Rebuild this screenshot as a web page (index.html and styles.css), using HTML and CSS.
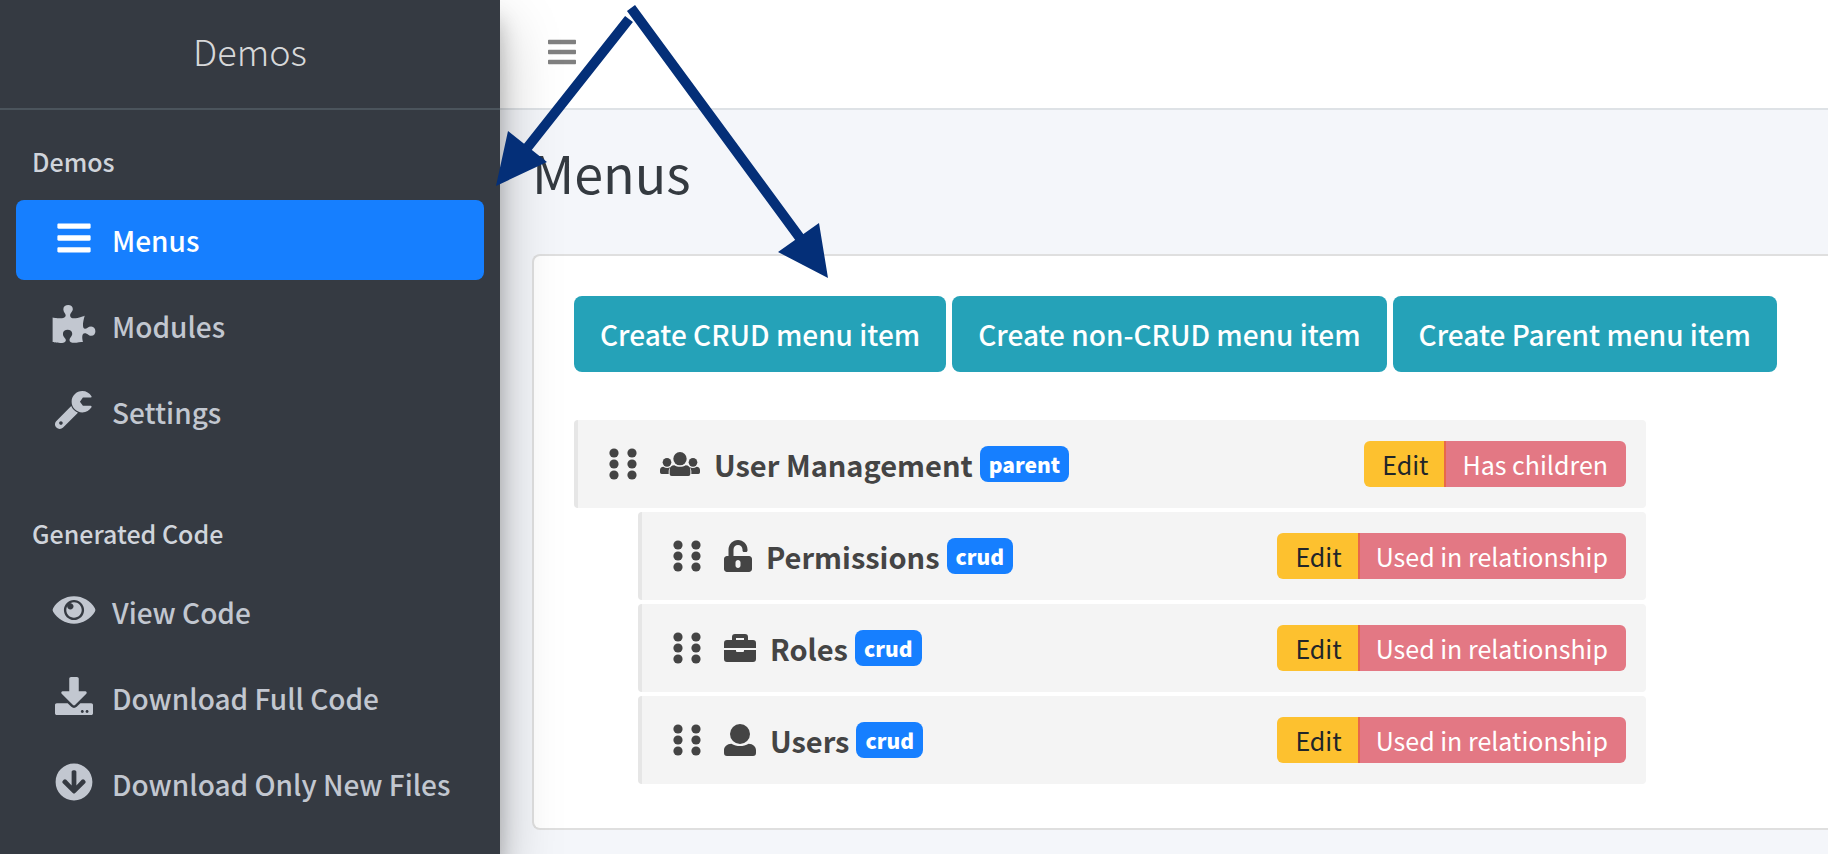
FILE: index.html
```html
<!DOCTYPE html>
<html lang="en">
<head>
<meta charset="utf-8">
<title>Menus - Demos</title>
<meta name="viewport" content="width=device-width, initial-scale=1">
<link rel="stylesheet" href="styles.css">
</head>
<body>
<svg class="sprite" aria-hidden="true">
  <symbol id="bars" viewBox="0 0 448 512"><path d="M16 132h416c8.800 0 16-7.200 16-16V76c0-8.800-7.200-16-16-16H16C7.200 60 0 67.200 0 76v40c0 8.800 7.200 16 16 16zm0 160h416c8.800 0 16-7.200 16-16v-40c0-8.800-7.200-16-16-16H16c-8.800 0-16 7.200-16 16v40c0 8.800 7.200 16 16 16zm0 160h416c8.800 0 16-7.200 16-16v-40c0-8.800-7.200-16-16-16H16c-8.800 0-16 7.200-16 16v40c0 8.800 7.200 16 16 16z"/></symbol>
  <symbol id="puzzle" viewBox="0 0 576 512"><path d="M519.442 288.651c-41.519 0-59.5 31.593-82.058 31.593C377.409 320.244 432 144 432 144s-196.288 80-196.288-3.297c0-35.827 36.288-46.25 36.288-85.985C272 19.216 243.885 0 210.539 0c-34.654 0-66.366 18.891-66.366 56.346 0 41.364 31.711 59.277 31.711 81.75C175.885 207.719 0 166.758 0 166.758v333.237s178.635 41.047 178.635-28.662c0-22.473-40-40.107-40-81.471 0-37.456 29.25-56.346 63.577-56.346 33.673 0 61.788 19.216 61.788 54.717 0 39.735-36.288 50.158-36.288 85.985 0 60.803 129.675 25.73 181.23 25.73 0 0-34.725-120.101 25.827-120.101 35.962 0 46.423 36.152 86.308 36.152C556.712 416 576 387.99 576 354.443c0-34.199-18.962-65.792-56.558-65.792z"/></symbol>
  <symbol id="wrench" viewBox="0 0 512 512"><path d="M481.156 200c9.3 0 15.12 10.155 10.325 18.124C466.295 259.992 420.419 288 368 288c-79.222 0-143.501-63.974-143.997-143.079C223.505 65.469 288.548-.001 368.002 0c52.362.001 98.196 27.949 123.4 69.743C496.24 77.766 490.523 88 481.154 88H376l-40 56 40 56h105.156zm-171.649 93.003L109.255 493.255c-24.994 24.993-65.515 24.994-90.51 0-24.993-24.994-24.993-65.516 0-90.51L218.991 202.5c16.16 41.197 49.303 74.335 90.516 90.503zM104 432c0-13.255-10.745-24-24-24s-24 10.745-24 24 10.745 24 24 24 24-10.745 24-24z"/></symbol>
  <symbol id="eye" viewBox="0 0 576 512"><path d="M569.354 231.631C512.969 135.949 407.81 72 288 72 168.14 72 63.004 135.994 6.646 231.631a47.999 47.999 0 0 0 0 48.739C63.031 376.051 168.19 440 288 440c119.86 0 224.996-63.994 281.354-159.631a47.997 47.997 0 0 0 0-48.738zM288 392c-75.162 0-136-60.827-136-136 0-75.162 60.826-136 136-136 75.162 0 136 60.826 136 136 0 75.162-60.826 136-136 136zm104-136c0 57.438-46.562 104-104 104s-104-46.562-104-104c0-17.708 4.431-34.379 12.236-48.973l-.001.032c0 23.651 19.173 42.823 42.824 42.823s42.824-19.173 42.824-42.823c0-23.651-19.173-42.824-42.824-42.824l-.032.001C253.621 156.431 270.292 152 288 152c57.438 0 104 46.562 104 104z"/></symbol>
  <symbol id="download" viewBox="0 0 512 512"><path d="M216 0h80c13.3 0 24 10.7 24 24v168h87.7c17.8 0 26.7 21.5 14.1 34.1L269.7 378.3c-7.5 7.5-19.8 7.5-27.3 0L90.1 226.1c-12.6-12.6-3.7-34.1 14.1-34.1H192V24c0-13.3 10.7-24 24-24zm296 376v112c0 13.3-10.7 24-24 24H24c-13.3 0-24-10.7-24-24V376c0-13.3 10.7-24 24-24h146.7l49 49c20.1 20.1 52.5 20.1 72.6 0l49-49H488c13.3 0 24 10.7 24 24zm-124 88c0-11-9-20-20-20s-20 9-20 20 9 20 20 20 20-9 20-20zm64 0c0-11-9-20-20-20s-20 9-20 20 9 20 20 20 20-9 20-20z"/></symbol>
  <symbol id="arrow-down" viewBox="0 0 512 512"><path d="M504 256c0 137-111 248-248 248S8 393 8 256 119 8 256 8s248 111 248 248zm-143.600-28.900L288 302.600V120c0-13.300-10.700-24-24-24h-16c-13.300 0-24 10.700-24 24v182.600l-72.400-75.500c-9.300-9.700-24.800-9.900-34.300-.4l-10.900 11c-9.400 9.400-9.400 24.600 0 33.900L239 404.300c9.400 9.400 24.600 9.400 33.900 0l132.700-132.700c9.400-9.400 9.400-24.600 0-33.900l-10.900-11c-9.500-9.500-25-9.300-34.300.4z"/></symbol>
  <symbol id="users" viewBox="0 0 120 96"><circle cx="60" cy="32" r="20"/><circle cx="21" cy="43" r="13"/><circle cx="99" cy="43" r="13"/><path d="M43 52c10 6 24 6 34 0 8 0 14 6 14 14v12a6 6 0 0 1-6 6H35a6 6 0 0 1-6-6V66c0-8 6-14 14-14zM10 56c7 5 15 5 22 1-4 4-6 8-6 13v8H5a5 5 0 0 1-5-5v-7c0-6 4-10 10-10zM110 56c-7 5-15 5-22 1 4 4 6 8 6 13v8h21a5 5 0 0 0 5-5v-7c0-6-4-10-10-10z"/></symbol>
  <symbol id="unlock" viewBox="0 0 448 512"><path d="M400 256H152V152.900c0-39.600 31.700-72.500 71.300-72.900 40-.4 72.700 32.100 72.700 72v16c0 13.300 10.700 24 24 24h32c13.300 0 24-10.700 24-24v-16C376 68 307.500-.3 223.500 0 139.500.3 72 69.500 72 153.500V256H48c-26.500 0-48 21.500-48 48v160c0 26.500 21.500 48 48 48h352c26.500 0 48-21.500 48-48V304c0-26.500-21.500-48-48-48zM264 408c0 22.100-17.900 40-40 40s-40-17.900-40-40v-48c0-22.100 17.900-40 40-40s40 17.900 40 40v48z"/></symbol>
  <symbol id="briefcase" viewBox="0 0 96 96"><path d="M24 24V15a9 9 0 0 1 9-9h30a9 9 0 0 1 9 9v9h15a9 9 0 0 1 9 9v15H0V33a9 9 0 0 1 9-9zM36 18v6h24v-6zM0 54h36v3a3 3 0 0 0 3 3h18a3 3 0 0 0 3-3v-3h36v27a9 9 0 0 1-9 9H9a9 9 0 0 1-9-9z"/></symbol>
  <symbol id="user" viewBox="0 0 96 96"><circle cx="48" cy="30" r="30"/><path d="M22 59c8 5 17 7 26 7s18-2 26-7c13 0 22 9 22 20v8a9 9 0 0 1-9 9H9a9 9 0 0 1-9-9v-8c0-11 9-20 22-20z"/></symbol>
  <symbol id="grip" viewBox="0 0 28 32"><circle cx="5" cy="5" r="4.600"/><circle cx="23" cy="5" r="4.600"/><circle cx="5" cy="16" r="4.600"/><circle cx="23" cy="16" r="4.600"/><circle cx="5" cy="27" r="4.600"/><circle cx="23" cy="27" r="4.600"/></symbol>
</svg>

<div class="app">
  <aside class="sidebar">
    <a class="brand" href="#">Demos</a>
    <nav class="side-nav">
      <section class="nav-group">
        <h2 class="nav-heading">Demos</h2>
        <a class="nav-link active" href="#"><span class="nav-icon"><svg class="icon"><use href="#bars"/></svg></span>Menus</a>
        <a class="nav-link" href="#"><span class="nav-icon"><svg class="icon"><use href="#puzzle"/></svg></span>Modules</a>
        <a class="nav-link" href="#"><span class="nav-icon"><svg class="icon"><use href="#wrench"/></svg></span>Settings</a>
      </section>
      <section class="nav-group">
        <h2 class="nav-heading">Generated Code</h2>
        <a class="nav-link" href="#"><span class="nav-icon"><svg class="icon"><use href="#eye"/></svg></span>View Code</a>
        <a class="nav-link" href="#"><span class="nav-icon"><svg class="icon"><use href="#download"/></svg></span>Download Full Code</a>
        <a class="nav-link" href="#"><span class="nav-icon"><svg class="icon"><use href="#arrow-down"/></svg></span>Download Only New Files</a>
      </section>
    </nav>
  </aside>

  <div class="page">
    <header class="topbar">
      <button class="toggle" type="button" aria-label="Toggle sidebar"><svg class="toggle-icon"><use href="#bars"/></svg></button>
    </header>
    <main class="content">
      <h1 class="title">Menus</h1>
      <section class="card">
        <div class="actions">
          <button class="btn-create" type="button">Create CRUD menu item</button>
          <button class="btn-create" type="button">Create non-CRUD menu item</button>
          <button class="btn-create" type="button">Create Parent menu item</button>
        </div>
        <ul class="menu-list">
          <li>
            <div class="menu-row">
              <svg class="grip"><use href="#grip"/></svg>
              <svg class="row-icon wide"><use href="#users"/></svg>
              <span class="row-name">User Management</span><span class="tag">parent</span>
              <span class="row-actions"><button class="btn-edit" type="button">Edit</button><button class="btn-locked" type="button">Has children</button></span>
            </div>
            <ul class="menu-list nested">
              <li class="menu-row">
                <svg class="grip"><use href="#grip"/></svg>
                <svg class="row-icon narrow"><use href="#unlock"/></svg>
                <span class="row-name">Permissions</span><span class="tag">crud</span>
                <span class="row-actions"><button class="btn-edit" type="button">Edit</button><button class="btn-locked" type="button">Used in relationship</button></span>
              </li>
              <li class="menu-row">
                <svg class="grip"><use href="#grip"/></svg>
                <svg class="row-icon"><use href="#briefcase"/></svg>
                <span class="row-name">Roles</span><span class="tag">crud</span>
                <span class="row-actions"><button class="btn-edit" type="button">Edit</button><button class="btn-locked" type="button">Used in relationship</button></span>
              </li>
              <li class="menu-row">
                <svg class="grip"><use href="#grip"/></svg>
                <svg class="row-icon"><use href="#user"/></svg>
                <span class="row-name">Users</span><span class="tag">crud</span>
                <span class="row-actions"><button class="btn-edit" type="button">Edit</button><button class="btn-locked" type="button">Used in relationship</button></span>
              </li>
            </ul>
          </li>
        </ul>
      </section>
    </main>
  </div>

  <svg class="arrows" viewBox="0 0 840 290" aria-hidden="true">
    <path class="shaft" d="M629 19 527 148M631 8 800 238"/>
    <path class="head" d="M496 186 508 131 547 162zM828 278 778 252 819 223z"/>
  </svg>
</div>
</body>
</html>
```
FILE: styles.css
```css
* { box-sizing: border-box; }

body {
  margin: 0;
  font-family: "Noto Sans CJK SC", "Noto Sans", sans-serif;
  font-size: 28px;
  line-height: 48px;
  color: #212529;
  background: #f4f6fa;
}

h1, h2, ul { margin: 0; padding: 0; font-weight: 400; }
ul { list-style: none; }
a { text-decoration: none; }
button { font: inherit; border: 0; margin: 0; cursor: pointer; white-space: nowrap; }
svg { fill: currentColor; flex: none; }

.sprite { display: none; }

.app {
  position: relative;
  display: flex;
  min-height: 100vh;
  overflow: hidden;
}

/* Sidebar */
.sidebar {
  position: relative;
  z-index: 1;
  flex: 0 0 500px;
  background: #353a42;
  box-shadow: 0 28px 56px rgba(0, 0, 0, .25), 0 20px 20px rgba(0, 0, 0, .22);
}

.brand {
  display: flex;
  align-items: center;
  justify-content: center;
  height: 110px;
  padding-bottom: 8px;
  border-bottom: 2px solid #4b545c;
  font-size: 36px;
  font-weight: 300;
  color: #d7d8d9;
}

.nav-group { padding: 0 16px; margin-bottom: 30px; }

.nav-heading {
  height: 90px;
  padding: 27px 16px 0;
  font-size: 25px;
  font-weight: 500;
  line-height: 48px;
  color: #d0d4db;
}

.nav-link {
  display: flex;
  align-items: center;
  height: 80px;
  margin-bottom: 6px;
  padding: 0 16px 0 32px;
  border-radius: 8px;
  color: #c2c7d0;
  font-weight: 500;
  white-space: nowrap;
}

.nav-link:last-child { margin-bottom: 0; }
.nav-link.active { background: #167fff; color: #fff; }

.nav-icon {
  display: flex;
  justify-content: center;
  width: 52px;
  margin-right: 12px;
  padding-bottom: 4px;
}

.icon { width: 44px; height: 38px; }

/* Page */
.page { flex: 1; min-width: 0; }

.topbar {
  display: flex;
  align-items: center;
  height: 110px;
  padding: 0 32px 4px;
  background: #fff;
  border-bottom: 2px solid #dee2e6;
}

.toggle {
  display: flex;
  padding: 8px 16px;
  background: none;
  color: #808080;
}

.toggle-icon { width: 28px; height: 32px; }

.content { padding: 26px 0 24px 32px; }

.title {
  margin-bottom: 46px;
  font-size: 52px;
  line-height: 72px;
  color: #343a40;
}

.card {
  padding: 40px 40px 44px;
  background: #fff;
  border: 2px solid #dfdfdf;
  border-right: 0;
  border-radius: 8px 0 0 8px;
}

.actions { display: flex; gap: 6px; margin-bottom: 48px; }

.btn-create {
  height: 76px;
  padding: 0 26px;
  border-radius: 8px;
  background: #25a2b8;
  color: #fff;
  font-weight: 500;
}

/* Menu tree */
.menu-list {
  display: flex;
  flex-direction: column;
  gap: 4px;
  max-width: 1072px;
}

.nested { margin: 4px 0 0 64px; }

.menu-row {
  display: flex;
  align-items: center;
  height: 88px;
  padding: 0 20px 0 31px;
  border-left: 4px solid #e6e6e6;
  border-radius: 4px;
  background: #f4f4f4;
  color: #444;
}

.grip { width: 28px; height: 32px; margin-right: 23px; }
.row-icon { width: 32px; height: 32px; margin-right: 14px; }
.row-icon.wide { width: 40px; }
.row-icon.narrow { width: 28px; }
.row-name { font-size: 29px; font-weight: 700; white-space: nowrap; }

.tag {
  margin-left: 7px;
  padding: 0 9px;
  border-radius: 8px;
  background: #167fff;
  color: #fff;
  font-size: 21px;
  font-weight: 900;
  line-height: 36px;
}

.row-actions { display: flex; margin-left: auto; }

.btn-edit, .btn-locked { height: 46px; font-size: 25px; line-height: 46px; }

.btn-edit {
  padding: 0 16px 0 18px;
  border-radius: 6px 0 0 6px;
  background: #fdc12f;
  color: #212529;
}

.btn-locked {
  padding: 0 18px 0 16px;
  border-left: 2px solid #e8684a;
  border-radius: 0 6px 6px 0;
  background: #e37884;
  color: #fff;
}

/* Callout arrows drawn across the sidebar and page */
.arrows {
  position: absolute;
  z-index: 2;
  top: 0;
  left: 0;
  width: 840px;
  height: 290px;
  pointer-events: none;
}

.shaft { fill: none; stroke: #042f78; stroke-width: 10; }
.head { fill: #042f78; }
```
